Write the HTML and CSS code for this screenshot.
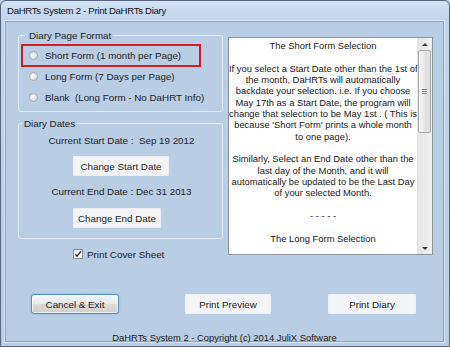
FILE: index.html
```html
<!DOCTYPE html>
<html lang="en">
<head>
    <meta charset="UTF-8">
    <title>DaHRTs System 2 - Print DaHRTs Diary</title>
    <link rel="stylesheet" href="styles.css">
</head>
<body>

    <div class="window">
        <div class="titlebar">DaHRTs System 2 - Print DaHRTs Diary</div>

        <div class="client">
            <div class="main">
                <div class="left">
                    <fieldset class="group format">
                        <legend>Diary Page Format</legend>
                        <label class="option marked"><span class="radio"></span>Short Form (1 month per Page)</label>
                        <label class="option"><span class="radio"></span>Long Form (7 Days per Page)</label>
                        <label class="option"><span class="radio"></span>Blank&nbsp; (Long Form - No DaHRT Info)</label>
                    </fieldset>

                    <fieldset class="group dates">
                        <legend>Diary Dates</legend>
                        <div class="date-line">Current Start Date :&nbsp; Sep 19 2012</div>
                        <button class="btn start-btn">Change Start Date</button>
                        <div class="date-line">Current End Date : Dec 31 2013</div>
                        <button class="btn end-btn">Change End Date</button>
                    </fieldset>

                    <label class="cover">
                        <span class="check">
                            <svg width="8" height="8" viewBox="0 0 8 8"><path d="M1.3 4.2 L3.1 6.2 L6.8 1.4" fill="none" stroke="#2a2a2a" stroke-width="1.3"/></svg>
                        </span>
                        Print Cover Sheet
                    </label>
                </div>

                <div class="info">
                    <div class="info-text">
                        <p>The Short Form Selection</p>
                        <p>If you select a Start Date other than the 1st of<br>
                        the month, DaHRTs will automatically<br>
                        backdate your selection. i.e. If you choose<br>
                        May 17th as a Start Date, the program will<br>
                        change that selection to be May 1st . ( This is<br>
                        because 'Short Form' prints a whole month<br>
                        to one page).</p>
                        <p>Similarly, Select an End Date other than the<br>
                        last day of the Month, and it will<br>
                        automatically be updated to be the Last Day<br>
                        of your selected Month.</p>
                        <p>- - - - -</p>
                        <p>The Long Form Selection</p>
                    </div>
                    <div class="scrollbar">
                        <div class="sb-btn"><span class="arrow-up"></span></div>
                        <div class="sb-track">
                            <div class="sb-thumb"><span class="grip"></span></div>
                        </div>
                        <div class="sb-btn"><span class="arrow-down"></span></div>
                    </div>
                </div>
            </div>

            <div class="actions">
                <button class="btn cancel">Cancel &amp; Exit</button>
                <button class="btn preview">Print Preview</button>
                <button class="btn print">Print Diary</button>
            </div>

            <div class="footer">DaHRTs System 2 - Copyright (c) 2014 JuliX Software</div>
        </div>
    </div>

</body>
</html>
```

FILE: styles.css
```css
body {
    margin: 0;
    font-family: "Liberation Sans", Arial, sans-serif;
    font-size: 9.8px;
    color: #1c1c1c;
    background: #b9cde5;
}

.window {
    width: 450px;
    height: 347px;
    box-sizing: border-box;
    border: 1px solid #55677e;
    border-radius: 6px 6px 0 0;
    background: linear-gradient(#d3e2f3 0, #c0d4ec 20px, #b8cde6 100%);
    display: flex;
    flex-direction: column;
}

.titlebar {
    height: 20px;
    line-height: 20px;
    padding-left: 6px;
    font-size: 9.6px;
    letter-spacing: -0.3px;
    color: #111;
}

.client {
    flex: 1;
    margin: 0 5px 4px 4px;
    background: #b9cde5;
    border: 1px solid #8ea3bd;
    box-shadow: 0 0 0 1px rgba(255, 255, 255, 0.45);
    display: flex;
    flex-direction: column;
}

.main {
    display: flex;
    padding: 7px 10px 0 12px;
}

.left {
    width: 205px;
}

/* group boxes */
.group {
    margin: 0;
    padding: 0;
    border: 1px solid #e2eaf4;
    border-radius: 3px;
}

.group legend {
    line-height: 13px;
    padding: 0 2px;
}

.format legend {
    margin-left: 6px;
    padding-left: 4px;
}

.format {
    padding: 3px 0 3px 0;
}

.option {
    display: flex;
    align-items: center;
    height: 21px;
    padding-left: 10px;
}

.option.marked {
    width: 171px;
    margin-left: 3px;
    padding-left: 7px;
    outline: 2px solid #d21e1e;
    outline-offset: -1px;
}

.radio {
    width: 9px;
    height: 9px;
    box-sizing: border-box;
    border: 1px solid #a3a9b1;
    border-radius: 50%;
    background: radial-gradient(circle at 40% 40%, #fbfbfb, #d3d7dc);
    margin-right: 7px;
}

.dates {
    margin-top: 5px;
    padding: 5px 0 10px 0;
}

.dates legend {
    margin-left: 3px;
}

.date-line {
    text-align: center;
    line-height: 12px;
    padding-left: 2px;
}

.btn {
    font-family: "Liberation Sans", Arial, sans-serif;
    font-size: 9.8px;
    color: #1e1e1e;
    height: 20px;
    padding: 0;
    border: 1px solid #eef0f3;
    border-radius: 1px;
    background: #f4f5f7;
}

.dates .btn {
    display: block;
    margin-left: 54px;
}

.start-btn {
    width: 96px;
    margin-top: 9px;
    margin-bottom: 10px;
}

.end-btn {
    width: 88px;
    margin-top: 10px;
}

.cover {
    display: flex;
    align-items: center;
    height: 12px;
    margin-top: 9px;
    padding-left: 55px;
}

.check {
    width: 10px;
    height: 10px;
    box-sizing: border-box;
    border: 1px solid #8e9296;
    background: linear-gradient(#e4e6e8, #fbfbfb);
    margin-right: 4px;
    display: flex;
    align-items: center;
    justify-content: center;
}

/* info text box */
.info {
    width: 205px;
    height: 218px;
    margin: 8px 0 0 5px;
    box-sizing: border-box;
    border: 1px solid #8a939e;
    background: #fff;
    display: flex;
}

.info-text {
    flex: 1;
    overflow: hidden;
    padding-top: 2px;
    text-align: center;
    font-size: 9.4px;
    line-height: 11.35px;
    white-space: nowrap;
    color: #222;
}

.info-text p {
    margin: 0 0 11.35px 0;
}

.scrollbar {
    width: 15px;
    display: flex;
    flex-direction: column;
    background: linear-gradient(to right, #e4e4e4, #f1f1f1);
}

.sb-btn {
    height: 12px;
    display: flex;
    align-items: center;
    justify-content: center;
}

.arrow-up {
    border-left: 3px solid transparent;
    border-right: 3px solid transparent;
    border-bottom: 3px solid #3a3a3a;
}

.arrow-down {
    border-left: 3px solid transparent;
    border-right: 3px solid transparent;
    border-top: 3px solid #3a3a3a;
}

.sb-track {
    flex: 1;
}

.sb-thumb {
    height: 83px;
    margin: 0 1px;
    box-sizing: border-box;
    border: 1px solid #a9a9a9;
    border-radius: 2px;
    background: linear-gradient(to right, #f6f6f6, #e9e9e9 50%, #dcdcdc 51%, #e2e2e2);
    display: flex;
    align-items: center;
    justify-content: center;
}

.grip {
    width: 5px;
    height: 5px;
    background: repeating-linear-gradient(#8a8a8a 0, #8a8a8a 1px, transparent 1px, transparent 2px);
}

/* bottom buttons */
.actions {
    margin-top: auto;
    display: flex;
    padding-left: 25px;
}

.actions .btn {
    width: 88px;
}

.cancel {
    border: 1px solid #4d94bf;
    border-radius: 3px;
    background: linear-gradient(#f5f6f7, #e9eaeb 48%, #dcd9d9 52%, #d2cfd0);
    box-shadow: 0 0 2px rgba(70, 160, 220, 0.6), inset 0 0 0 1px rgba(255, 255, 255, 0.6);
}

.actions .preview {
    width: 86px;
    margin-left: 66px;
}

.print {
    margin-left: 57px;
}

.footer {
    margin-top: 18px;
    height: 9px;
    line-height: 12px;
    text-align: center;
    font-size: 9.4px;
    color: #1a1a1a;
}
```
